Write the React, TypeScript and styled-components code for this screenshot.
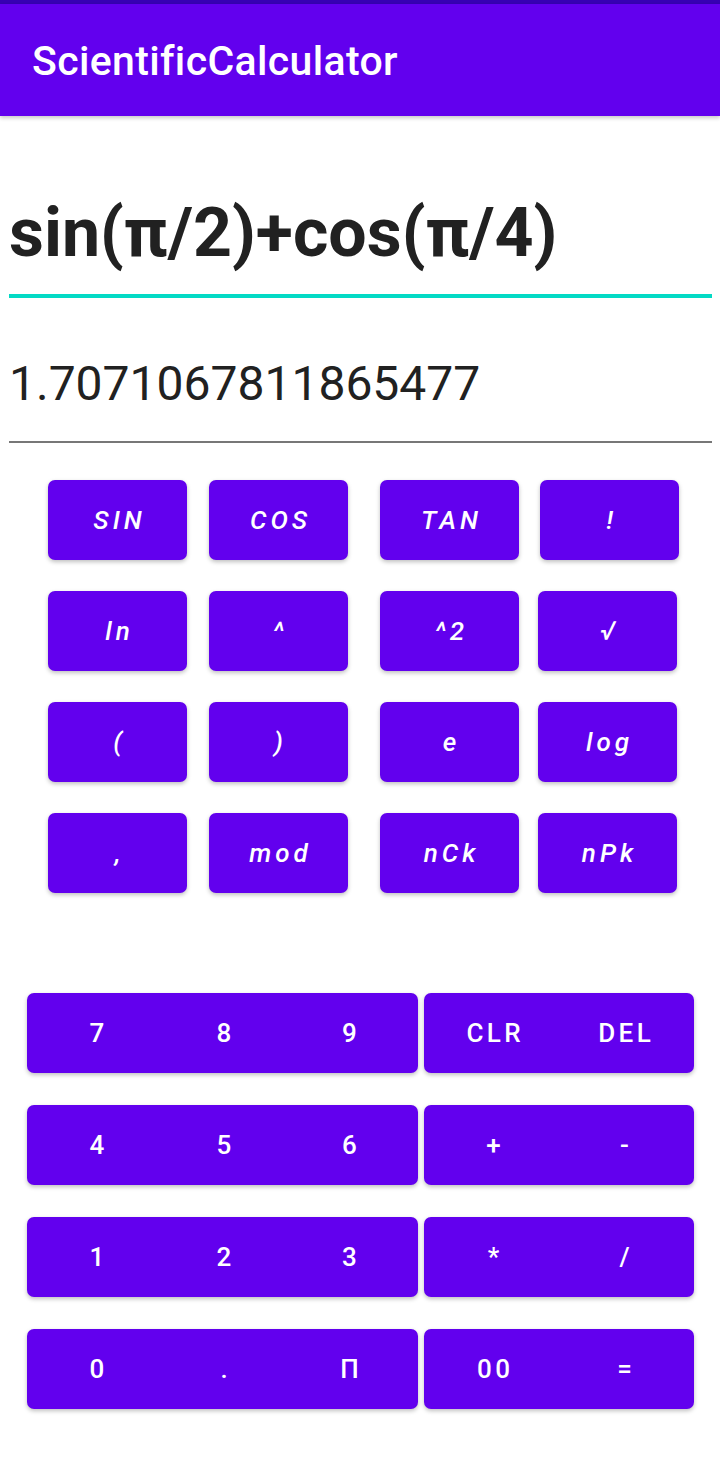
import React from "react";
import styled, { createGlobalStyle } from "styled-components";

const Global = createGlobalStyle`
  html, body { margin: 0; padding: 0; background: #ffffff; }
  body { font-family: Roboto, "Noto Sans", sans-serif; }
`;

const Screen = styled.div`
  width: 720px;
  height: 1463px;
  background: #ffffff;
  display: flex;
  flex-direction: column;
  overflow: hidden;
`;

const StatusBar = styled.div`
  height: 4px;
  background: #3700b3;
`;

const AppBar = styled.header`
  height: 112px;
  background: #6200ee;
  display: flex;
  align-items: center;
  padding-left: 32px;
  box-shadow: 0 2px 4px rgba(0, 0, 0, 0.22);
  position: relative;
  z-index: 1;
`;

const Title = styled.h1`
  margin: 0;
  font-family: Roboto, sans-serif;
  font-weight: 500;
  font-size: 41px;
  color: #ffffff;
  letter-spacing: 0.35px;
  padding-top: 2px;
`;

const Display = styled.section`
  padding: 0 8px 0 9px;
  display: flex;
  flex-direction: column;
`;

const Expression = styled.div`
  margin-top: 72px;
  font-family: Roboto, sans-serif;
  font-weight: 700;
  font-size: 68px;
  line-height: 90px;
  height: 110px;
  box-sizing: border-box;
  color: #212121;
  border-bottom: 4px solid #03dac5;
  white-space: nowrap;
`;

const Result = styled.div`
  margin-top: 38px;
  font-family: Roboto, sans-serif;
  font-weight: 400;
  font-size: 48px;
  line-height: 96px;
  height: 107px;
  box-sizing: border-box;
  color: #212121;
  border-bottom: 2px solid #777777;
`;

const SciGrid = styled.div`
  margin: 37px 0 0 48px;
  display: grid;
  grid-template-columns: 161px 171px 160px 139px;
  grid-auto-rows: 80px;
  row-gap: 31px;
`;

const SciKey = styled.button<{ $shift?: number }>`
  width: 139px;
  height: 80px;
  margin-left: ${(p) => p.$shift ?? 0}px;
  border: none;
  border-radius: 7px;
  background: #6200ee;
  color: #ffffff;
  font-family: Roboto, sans-serif;
  font-weight: 500;
  font-style: italic;
  font-size: 26px;
  letter-spacing: 4px;
  text-indent: 4px;
  box-shadow: 0 2px 4px rgba(0, 0, 0, 0.25);
  padding: 0;
  display: flex;
  align-items: center;
  justify-content: center;
`;

const Pad = styled.div`
  margin: 100px 0 0 27px;
  display: flex;
  flex-direction: column;
  gap: 32px;
`;

const PadRow = styled.div`
  display: flex;
  gap: 6px;
`;

const KeyGroup = styled.div`
  display: flex;
  height: 80px;
  border-radius: 7px;
  background: #6200ee;
  box-shadow: 0 2px 4px rgba(0, 0, 0, 0.25);
`;

const PadKey = styled.button<{ $w: number; $padR?: number }>`
  width: ${(p) => p.$w}px;
  height: 80px;
  border: none;
  background: transparent;
  color: #ffffff;
  font-family: Roboto, sans-serif;
  font-weight: 500;
  font-size: 26px;
  letter-spacing: 3.4px;
  text-indent: 3.4px;
  padding: 0 ${(p) => p.$padR ?? 0}px 0 0;
  display: flex;
  align-items: center;
  justify-content: center;
`;

const sciRows: string[][] = [
  ["SIN", "COS", "TAN", "!"],
  ["ln", "^", "^2", "√"],
  ["(", ")", "e", "log"],
  [",", "mod", "nCk", "nPk"],
];

const padRows: { left: string[]; right: string[] }[] = [
  { left: ["7", "8", "9"], right: ["CLR", "DEL"] },
  { left: ["4", "5", "6"], right: ["+", "-"] },
  { left: ["1", "2", "3"], right: ["*", "/"] },
  { left: ["0", ".", "Π"], right: ["00", "="] },
];

const leftWidths = [140, 114, 137];
const rightWidths = [139, 131];
const rightPads = [0, 8];

export default function App() {
  return (
    <>
      <Global />
      <Screen>
        <StatusBar />
        <AppBar>
          <Title>ScientificCalculator</Title>
        </AppBar>
        <Display>
          <Expression>sin(π/2)+cos(π/4)</Expression>
          <Result>1.7071067811865477</Result>
        </Display>
        <SciGrid>
          {sciRows.map((row, r) =>
            row.map((label, c) => (
              <SciKey key={`${r}-${c}`} $shift={c === 3 && r > 0 ? -2 : 0}>
                {label}
              </SciKey>
            ))
          )}
        </SciGrid>
        <Pad>
          {padRows.map((row, r) => (
            <PadRow key={r}>
              <KeyGroup>
                {row.left.map((label, i) => (
                  <PadKey key={label} $w={leftWidths[i]}>
                    {label}
                  </PadKey>
                ))}
              </KeyGroup>
              <KeyGroup>
                {row.right.map((label, i) => (
                  <PadKey key={label} $w={rightWidths[i]} $padR={rightPads[i]}>
                    {label}
                  </PadKey>
                ))}
              </KeyGroup>
            </PadRow>
          ))}
        </Pad>
      </Screen>
    </>
  );
}
